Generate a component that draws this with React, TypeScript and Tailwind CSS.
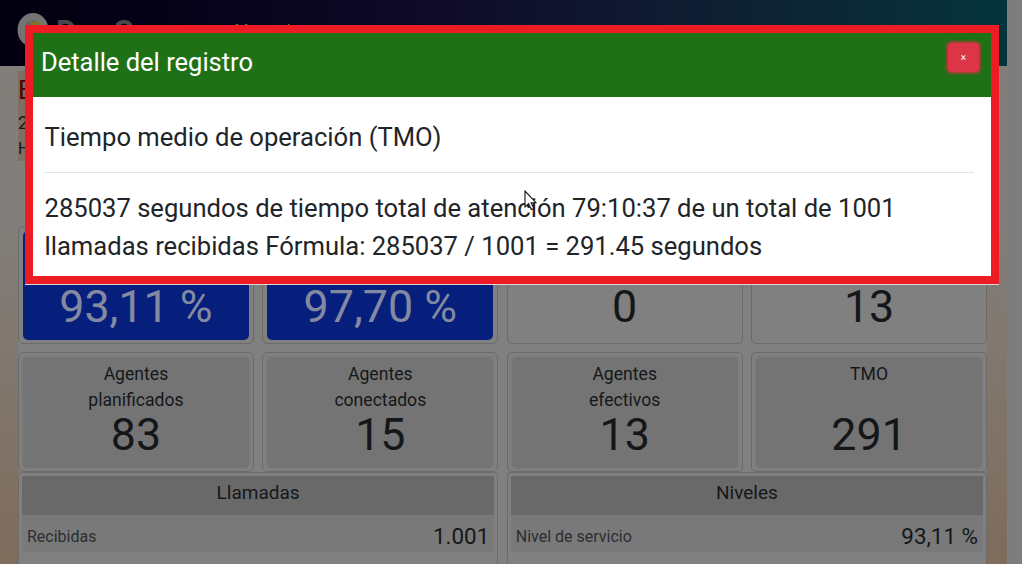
type Kpi = { title: string[]; value: string; blue?: boolean; plain?: boolean };

const topRow: Kpi[] = [
  { title: [], value: '93,11 %', blue: true },
  { title: [], value: '97,70 %', blue: true },
  { title: [], value: '0', plain: true },
  { title: [], value: '13', plain: true },
];

const agentRow: Kpi[] = [
  { title: ['Agentes', 'planificados'], value: '83' },
  { title: ['Agentes', 'conectados'], value: '15' },
  { title: ['Agentes', 'efectivos'], value: '13' },
  { title: ['TMO'], value: '291' },
];

const panels = [
  {
    title: 'Llamadas',
    rows: [
      { label: 'Recibidas', value: '1.001' },
      { label: 'Atendidas', value: '978' },
    ],
  },
  {
    title: 'Niveles',
    rows: [
      { label: 'Nivel de servicio', value: '93,11 %' },
      { label: 'Nivel de atención', value: '97,70 %' },
    ],
  },
];

function KpiCard({ title, value, blue, plain }: Kpi) {
  const tone = blue
    ? 'bg-[#061e7c] text-[#8489a2]'
    : plain
      ? 'bg-[#808080] text-[#14171a]'
      : 'bg-[#747474] text-[#14171a] shadow-[0_0_3px_#747474]';
  return (
    <div className="min-h-0 rounded-[5px] border border-[#6b6b6b] bg-[#808080] px-[4px] pb-[3px] pt-[4px]">
      <div className={`flex h-full flex-col items-center justify-between rounded-[5px] ${tone}`}>
        <div className="pt-[4px] text-center text-[17.6px] leading-[26px]">
          {title.map((line) => (
            <div key={line}>{line}</div>
          ))}
        </div>
        <div className="pb-[11px] text-[44.8px] leading-[44px]">{value}</div>
      </div>
    </div>
  );
}

function Cursor() {
  return (
    <svg className="absolute left-[491px] top-[157px]" width="13" height="21" viewBox="0 0 13 21">
      <path d="M1 1V17L4.6 13.7L7.3 19.5L9.8 18.4L7.2 12.7H12Z" fill="#fff" stroke="#111" strokeWidth="1.1" />
    </svg>
  );
}

export default function App() {
  return (
    <div className="relative flex h-[564px] w-[1022px] overflow-hidden bg-[#7d7d7f] font-[Roboto,sans-serif] text-[#14171a]">
      <div className="flex w-[1007px] flex-col bg-linear-to-b from-[#827e7a] from-40% to-[#7e6c5c]">
        <header className="flex h-[66px] shrink-0 items-start bg-linear-to-r from-[#02000f] via-[#0f0c29] via-45% to-[#04343d] pl-[17px] pt-[13px]">
          <svg width="32" height="34" viewBox="0 0 32 34">
            <ellipse cx="16" cy="17" rx="15.5" ry="17" fill="#747474" />
            <path d="M8 10L16 27L23 14L18 7Z" fill="#5d6a5d" />
            <path d="M13 9H24L20 18Z" fill="#827522" />
          </svg>
          <div className="ml-[7px] flex gap-[37px] text-[32px] font-bold leading-[36px] text-[#48484d]">
            <span>D</span>
            <span>S</span>
          </div>
          <div className="ml-[101px] mt-[8px] flex gap-[38px] text-[16px] leading-[19px] text-[#827522]">
            <span>M</span>
            <span>l</span>
          </div>
        </header>

        <main className="flex min-h-0 flex-1 flex-col pl-[18px] pr-[20px] pt-[5px]">
          <div className="h-[90px] w-[200px] shrink-0 bg-[#7e6f60]">
            <div className="text-[26px] leading-[39px] text-[#500000]">E</div>
            <div className="text-[18px] leading-[25px]">2</div>
            <div className="text-[16px] leading-[28px]">H</div>
          </div>
          <div className="mt-[65px] flex min-h-0 flex-1 flex-col bg-[#808080]">
            <div className="grid h-[118px] shrink-0 grid-cols-4 grid-rows-1 gap-x-[8.5px]">
              {topRow.map((k) => (
                <KpiCard key={k.value} {...k} />
              ))}
            </div>
            <div className="mt-[8px] grid h-[120px] shrink-0 grid-cols-4 grid-rows-1 gap-x-[8.5px]">
              {agentRow.map((k) => (
                <KpiCard key={k.value} {...k} />
              ))}
            </div>
            <div className="grid min-h-0 flex-1 grid-cols-2 gap-x-[8.5px]">
              {panels.map((p) => (
                <section
                  key={p.title}
                  className="rounded-t-[4px] border border-b-0 border-[#6b6b6b] bg-[#808080] px-[3px] pt-[3px]"
                >
                  <h3 className="h-[39px] bg-[#696969] text-center text-[19px] leading-[34px]">{p.title}</h3>
                  {p.rows.map((r) => (
                    <div
                      key={r.label}
                      className="flex h-[37px] items-center justify-between px-[5px] pt-[6px] odd:bg-[#808080] even:bg-[#797979]"
                    >
                      <span className="text-[16px] text-[#2b2e31]">{r.label}</span>
                      <span className="pt-px text-[22.4px]">{r.value}</span>
                    </div>
                  ))}
                </section>
              ))}
            </div>
          </div>
        </main>
      </div>

      <div
        role="dialog"
        className="absolute left-[25px] top-[25px] h-[259px] w-[974px] border-8 border-[#ed1c24] bg-white text-[#212529] shadow-[0_1px_0_#d8d8d8]"
      >
        <div className="flex h-[64px] justify-between bg-[#1f7117] pl-[8px] pr-[12px] text-white">
          <h2 className="text-[25.5px] leading-[59px]">Detalle del registro</h2>
          <button className="mt-[10px] h-[29px] w-[31px] rounded-[4px] bg-[#dc3545] text-[10px] leading-none shadow-[0_0_2px_2px_#9c4530]">
            ×
          </button>
        </div>
        <div className="pl-[11.5px] pr-[17px] text-[25.6px]">
          <div className="h-[76px] border-b border-[#e2e3e4] pt-[21px] leading-[38px]">Tiempo medio de operación (TMO)</div>
          <p className="whitespace-nowrap pt-[16px] leading-[38px]">
            285037 segundos de tiempo total de atención 79:10:37 de un total de 1001
            <br />
            llamadas recibidas Fórmula: 285037 / 1001 = 291.45 segundos
          </p>
        </div>
        <Cursor />
      </div>
    </div>
  );
}
